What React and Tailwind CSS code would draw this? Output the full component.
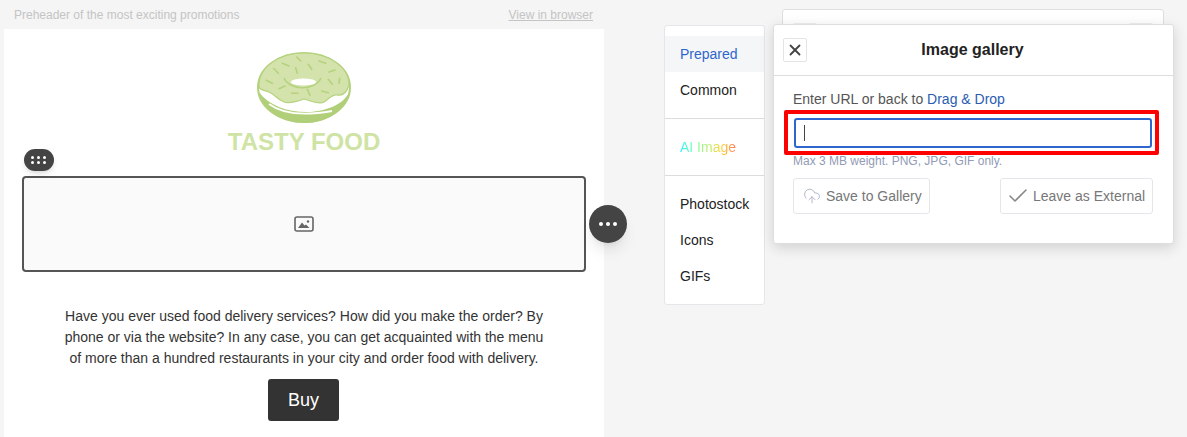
import { X, Check, CloudUpload } from 'lucide-react';

const font = { fontFamily: '"Liberation Sans", Arial, sans-serif' };

const sprinkles = [
  [297.7, 57, 301.7, 61], [283.3, 63.3, 290, 66], [320, 61, 326.7, 63.3], [309.3, 64.3, 312.7, 69.3],
  [296.7, 67.7, 298.3, 73.3], [330, 72, 336, 70], [275, 68.7, 279.3, 73.3], [267.3, 80.3, 273.3, 83.3],
  [280, 88.7, 286, 86], [329.3, 79.3, 333.3, 84.3], [340.7, 78.3, 340, 83.3], [292.7, 93.3, 299, 93.3],
  [308.3, 89.3, 311, 95.3], [322.7, 91, 329.3, 92.7],
];

const DonutLogo = () => (
  <svg viewBox="258 52 94 72" className="w-[94px] h-[72px]">
    <ellipse cx="305" cy="87.5" rx="46" ry="34.5" fill="#fff" stroke="#b5d27e" strokeWidth="2" />
    {/* bottom crescent */}
    <path d="M260 92 C264 112 284 123 306 123 C330 123 349 108 351 90 C346 104 330 110 312 112 C290 113 270 106 260 92 Z" fill="#b0cf78" />
    <path d="M270 104 C282 113 300 117 333 111" fill="none" stroke="#fff" strokeWidth="1.8" />
    {/* icing */}
    <path d="M260 87 C259 66 282 53 305 53 C330 53 351 68 350 85 C348 92 344 96 338 95 C333 94 330 99 325 102 C320 105 312 101 305 99 C299 101 292 104 285 102 C278 99 275 94 270 92 C265 90 261 90 260 87 Z" fill="#d3e3ab" stroke="#b5d27e" strokeWidth="1.2" />
    <path d="M285 78 C291 91 316 91 322 78" fill="none" stroke="#b5d27e" strokeWidth="1.6" />
    <ellipse cx="304.5" cy="82" rx="12.5" ry="3.6" fill="#fff" />
    {sprinkles.map(([x1, y1, x2, y2], i) => (
      <line key={i} x1={x1} y1={y1} x2={x2} y2={y2} stroke="#b5d27e" strokeWidth="1.6" strokeLinecap="round" />
    ))}
  </svg>
);

const MenuItem = ({ children, active }) => (
  <div className={`h-9 pl-[15px] flex items-center text-sm ${active ? 'bg-[#f5f6f8] text-[#2f66cc]' : 'text-[#222]'}`}>
    {children}
  </div>
);

const Email = () => (
  <div className="w-[600px] ml-[4px] shrink-0">
    <div className="h-[29px] flex justify-between items-center pl-[10px] pr-[11px] text-xs text-[#c4c4c4]">
      <span>Preheader of the most exciting promotions</span>
      <span className="underline">View in browser</span>
    </div>
    <div className="bg-white h-[408px] relative overflow-visible">
      <div className="flex flex-col items-center pt-[23px]">
        <DonutLogo />
        <div className="text-2xl font-bold leading-[28px] mt-[4px] text-[#cfe3a5]">TASTY FOOD</div>
      </div>

      {/* image block */}
      <div className="mx-[18px] mt-[20px] h-[96px] rounded border-2 border-[#555] bg-[#fafafa] flex items-center justify-center">
        <svg width="20" height="16" viewBox="0 0 20 16">
          <rect x="1" y="1" width="18" height="14" rx="2" fill="none" stroke="#666" strokeWidth="1.6" />
          <path d="M4 12 L8 6.5 L10.5 9.5 L12 8.5 L15.5 12 Z" fill="#666" />
          <circle cx="14" cy="5.5" r="1.2" fill="#666" />
        </svg>
      </div>

      <p className="mt-[34px] text-sm leading-[21px] text-[#333] text-center">
        Have you ever used food delivery services? How did you make the order? By
        <br />
        phone or via the website? In any case, you can get acquainted with the menu
        <br />
        of more than a hundred restaurants in your city and order food with delivery.
      </p>
      <div className="flex justify-center mt-[10px] pr-[1px]">
        <div className="w-[71px] h-[42px] bg-[#333] text-white text-lg rounded-[3px] flex items-center justify-center">Buy</div>
      </div>

      {/* block controls */}
      <div className="absolute left-[20px] top-[120px] w-[30px] h-[22px] rounded-full bg-[#444] grid grid-cols-3 gap-x-[2px] gap-y-[2px] place-content-center justify-center px-[7px] py-[5px] shadow-md">
        {[0, 1, 2, 3, 4, 5].map((i) => (
          <span key={i} className="w-[3px] h-[3px] rounded-full bg-white" />
        ))}
      </div>
      <div className="absolute left-[585px] top-[176px] w-[38px] h-[38px] rounded-full bg-[#444] flex items-center justify-center gap-[3px] shadow-lg">
        <span className="w-1 h-1 rounded-full bg-white" />
        <span className="w-1 h-1 rounded-full bg-white" />
        <span className="w-1 h-1 rounded-full bg-white" />
      </div>
    </div>
  </div>
);

const Sidebar = () => (
  <div className="w-[101px] h-[280px] mt-[25px] ml-[60px] shrink-0 bg-white border border-[#e6e6ea] rounded-[3px] pt-[10px]">
    <MenuItem active>Prepared</MenuItem>
    <MenuItem>Common</MenuItem>
    <div className="h-px bg-[#dcdcdf] mt-[10px]" />
    <div className="h-[56px] pl-[15px] flex items-center text-sm">
      <span className="bg-[linear-gradient(90deg,#2ef0ff,#7dffb0,#b8f06a,#ffd23f,#ff7a5c)] bg-clip-text text-transparent">AI Image</span>
    </div>
    <div className="h-px bg-[#dcdcdf]" />
    <div className="pt-[10px]">
      <MenuItem>Photostock</MenuItem>
      <MenuItem>Icons</MenuItem>
      <MenuItem>GIFs</MenuItem>
    </div>
  </div>
);

const Dialog = () => (
  <div className="absolute left-[773px] top-[24px] w-[401px] h-[220px] bg-white border border-[#dedede] rounded-[3px] shadow-[0_4px_14px_rgba(0,0,0,0.15)]">
    <div className="h-[51px] border-b border-[#ddd] flex items-center relative pl-[9px]">
      <div className="w-6 h-6 border border-[#e4e4e8] rounded-[2px] flex items-center justify-center">
        <X size={18} strokeWidth={2.4} className="text-[#444]" />
      </div>
      <div className="absolute inset-0 flex items-center justify-center text-base font-bold text-[#222] pr-[2px]">Image gallery</div>
    </div>
    <div className="pl-[19px] pr-[20px] pt-[15px]">
      <div className="text-sm leading-[16px] text-[#555]">
        Enter URL or back to <span className="text-[#2a5cb0]">Drag &amp; Drop</span>
      </div>
      <div className="mt-[11px] ml-[1px] w-[358px] h-[30px] border-2 border-[#2f66cc] rounded-[3px] flex items-center pl-[8px]">
        <span className="w-px h-[16px] bg-[#444]" />
      </div>
      <div className="mt-[7px] text-xs leading-[13px] text-[#929bb5]">Max 3 MB weight. PNG, JPG, GIF only.</div>
      <div className="flex justify-between mt-[10px]">
        <div className="h-[36px] w-[137px] border border-[#e6e6ea] rounded-[3px] flex items-center pl-[9px] gap-[5px] text-sm text-[#777]">
          <CloudUpload size={18} strokeWidth={1.2} className="text-[#aab2c5]" />
          Save to Gallery
        </div>
        <div className="h-[36px] w-[153px] border border-[#e6e6ea] rounded-[3px] flex items-center pl-[5px] gap-[3px] text-sm text-[#777]">
          <Check size={24} strokeWidth={1.6} className="text-[#888]" />
          Leave as External
        </div>
      </div>
    </div>
    {/* red annotation */}
    <div className="absolute left-[10px] top-[85px] w-[375px] h-[45px] border-4 border-[#f00] rounded-[2px]" />
  </div>
);

const App = () => {
  return (
    <div style={font} className="relative w-[1187px] h-[437px] overflow-hidden bg-[#f5f5f5] flex">
      <Email />
      <Sidebar />
      {/* panel behind the dialog */}
      <div className="w-[382px] h-[120px] mt-[9px] ml-[17px] shrink-0 bg-white border border-[#dedede] rounded-[3px] flex justify-between items-start px-[10px] pt-[13px]">
        <span className="w-[24px] h-[6px] rounded-[2px] bg-[#eee]" />
        <span className="w-[24px] h-[6px] rounded-[2px] bg-[#eee]" />
      </div>
      <Dialog />
    </div>
  );
};

export default App;
